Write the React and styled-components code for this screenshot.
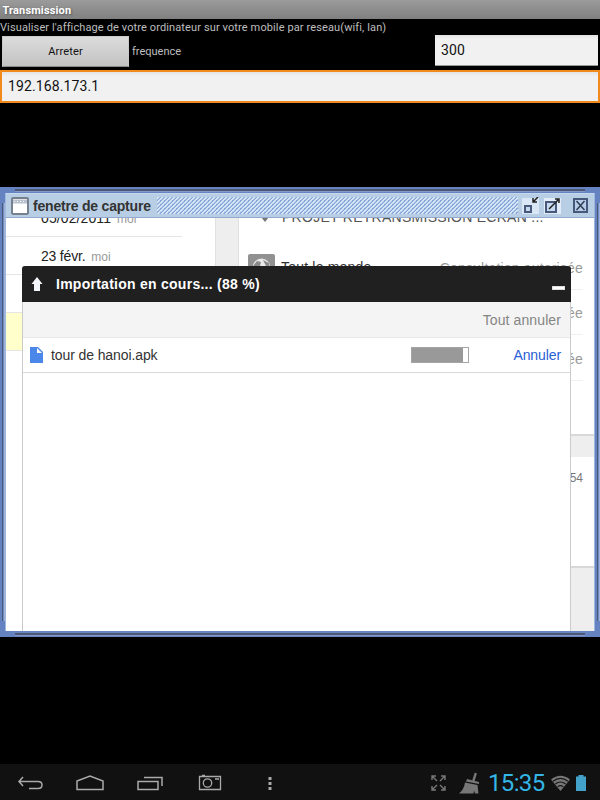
import React from "react";
import styled, { createGlobalStyle } from "styled-components";

const Global = createGlobalStyle`
  *{box-sizing:border-box}
  body{margin:0;background:#000;overflow:hidden}
`;
const Screen = styled.div`
  width:600px;height:800px;background:#000;color:#bebebe;display:flex;flex-direction:column;
  font:11px/15px Roboto,sans-serif;overflow:hidden;white-space:nowrap;
`;
const AppTitle = styled.header`
  height:19px;padding:3px 2.5px 0;background:linear-gradient(#9b9b9b,#808080);color:#fff;
  font-weight:700;font-size:11px;line-height:15px;letter-spacing:.14px;text-shadow:1px 1px 2px #555;
`;
const Description = styled.p`margin:0;height:16px;padding-top:1px;line-height:16px;font-size:11px;letter-spacing:.12px;`;
const Controls = styled.div`display:flex;height:35px;padding-right:2px;`;
const StopButton = styled.button`
  width:127px;height:31px;margin:1px 3px 0 2px;padding:0;border:1px solid #c9c9c9;border-bottom-color:#8b8b8b;
  background:linear-gradient(#dcdcdc,#c2c2c2);color:#111;font:11px Roboto,sans-serif;letter-spacing:.15px;
`;
const Label = styled.label`flex:1;line-height:33px;`;
const Field = styled.input`
  display:block;border:0;border-radius:0;outline:0;background:linear-gradient(#e3e3e3,#f1f1f1 4px);
  color:#111;font:14px Roboto,sans-serif;letter-spacing:.12px;
`;
const FrequencyField = styled(Field)`width:163px;height:31px;padding:0 6px;border-bottom:1px solid #999;`;
const AddressField = styled(Field)`
  width:600px;height:33px;border:solid #f18a1c;border-width:2px;padding:0 6px 1px;
`;
const Spacer = styled.div`height:${p => p.$height}px;flex:none;`;

const Frame = styled.section`
  height:450px;width:600px;background:#6683c1;display:grid;
  grid-template:6px 438px 6px / 5px 590px 5px;
`;
const Horizontal = styled.div`
  grid-column:1 / 4;margin:0 15px;
  background:linear-gradient(#6683c1 2px,#4c5974 2px 4px,#8198c9 4px 5px,#6683c1 5px);
`;
const Vertical = styled.div`
  margin:10px 0;background:linear-gradient(90deg,#6683c1 2px,#4c5974 2px 3px,#718ac2 3px 4px,#9cb3dc 4px);
`;
const Window = styled.div`display:flex;flex-direction:column;border:solid #a1b6dc;border-width:0 1px;overflow:hidden;`;
const TitleBar = styled.header`
  height:25px;background:#b8cee5;border-bottom:1px solid #91a9cd;border-top:1px solid #c5d8ed;
  display:flex;align-items:center;padding:0 5px 0 5px;
`;
const WindowTitle = styled.h1`
  margin:0 7px 0 4px;width:117px;color:#333;font:bold 14px "Liberation Sans",Arial,sans-serif;letter-spacing:-.2px;
`;
const Dots = styled.div`
  width:361px;height:17px;
  background:linear-gradient(135deg,#86a8d9 12%,#d5e4f6 12% 37%,#a9c2e4 37% 45%,#86a8d9 45% 62%,#d5e4f6 62% 87%,#86a8d9 87%) 0 0/4px 4px;
`;
const WindowActions = styled.div`display:flex;margin-left:auto;gap:5px;svg{display:block}svg:last-child{margin-left:6px}`;
const Content = styled.main`
  flex:1;min-height:0;position:relative;display:grid;grid-template-columns:209px 24px 355px;
  font:14px "Liberation Sans",Arial,sans-serif;overflow:hidden;
`;
const History = styled.div`background:#fff;margin-top:-19px;`;
const HistoryRow = styled.div`
  width:${p => p.$wide ? 209 : 176}px;height:38px;border-bottom:1px solid #e5e5e5;padding-left:35px;line-height:38px;color:#222;
  background:${p => p.$active ? "#ffffcb" : "#fff"};
  span{letter-spacing:${p => p.$spacing || "-.2px"}}
  small{margin-left:6px;font-size:12px;color:#999;letter-spacing:0}
`;
const Gutter = styled.div`background:#eee;border:solid #e1e1e1;border-width:0 1px;`;
const Sharing = styled.div`background:#eee;overflow:hidden;`;
const Card = styled.div`
  height:${p => p.$height}px;margin-top:${p => p.$gap || 0}px;background:#fff;border-bottom:2px solid #d8d8d8;
  padding:${p => p.$pad || "0"} 11px 0 9px;overflow:hidden;
`;
const ProjectRow = styled.div`
  height:16px;margin-top:-9px;display:flex;align-items:center;gap:11px;padding-left:11px;color:#555;
  letter-spacing:.27px;
  svg{flex:none}
`;
const ShareRow = styled.div`
  height:${p => p.$height || 45}px;display:flex;align-items:center;border-bottom:1px solid #f0f0f0;color:#999;
  svg{margin-right:6px}
  strong{font-weight:400;color:#333;letter-spacing:.2px}
  span{margin-left:auto;letter-spacing:.18px;padding-top:2px}
`;
const Count = styled.div`text-align:right;color:#777;font-size:12px;line-height:14px;`;
const Upload = styled.section`
  position:absolute;left:16px;top:48px;width:549px;height:366px;background:#fff;
  border:solid #cbcbcb;border-width:0 1px;border-radius:3px 3px 0 0;
`;
const UploadHeader = styled.header`
  height:36px;margin:0 -1px;background:#202020;color:#fff;border-radius:3px 3px 0 0;display:flex;
  align-items:center;padding:0 6px 0 8px;
  h2{margin:0 0 0 12px;font:bold 14px "Liberation Sans",Arial,sans-serif;letter-spacing:.26px}
`;
const Minimize = styled.i`width:13px;height:4px;margin:7px 0 0 auto;background:#fff;border:1px solid #ddd;`;
const CancelAll = styled.div`
  height:36px;background:#f4f4f4;border-bottom:1px solid #e8e8e8;color:#858585;text-align:right;
  line-height:36px;padding-right:9px;letter-spacing:.1px;
`;
const FileRow = styled.div`
  height:35px;display:flex;align-items:center;border-bottom:1px solid #d9d9d9;color:#333;padding:0 9px 0 7px;
`;
const FileName = styled.span`margin-left:8px;width:360px;letter-spacing:-.1px;`;
const Progress = styled.div`
  width:58px;height:16px;border:1px solid #a4a4a4;background:#fff;
  &::after{content:"";display:block;width:51px;height:14px;background:#999}
`;
const Cancel = styled.a`margin-left:auto;color:#2860d5;letter-spacing:-.1px;`;
const SystemBar = styled.footer`
  height:36px;margin-top:auto;background:#111;display:flex;align-items:center;
`;
const Navigation = styled.nav`
  display:grid;grid-template-columns:repeat(5,60px);width:430px;padding-top:3px;justify-items:center;flex:none;
  svg{display:block}
`;
const Status = styled.div`display:flex;align-items:center;svg{flex:none;display:block;margin-top:1px}`;
const Clock = styled.time`
  width:62px;margin-left:7px;padding-top:2px;color:#33b5e5;font:24px/28px Roboto,sans-serif;letter-spacing:-.65px;
`;

const Icon = ({ w, h, children, ...rest }) => (
  <svg width={w} height={h} viewBox={`0 0 ${w} ${h}`} fill="none" {...rest}>{children}</svg>
);

export default function App() {
  return <><Global /><Screen>
    <AppTitle>Transmission</AppTitle>
    <Description>Visualiser l'affichage de votre ordinateur sur votre mobile par reseau(wifi, lan)</Description>
    <Controls>
      <StopButton>Arreter</StopButton>
      <Label>frequence</Label>
      <FrequencyField defaultValue="300" />
    </Controls>
    <AddressField defaultValue="192.168.173.1" />
    <Spacer $height={84} />
    <Frame>
      <Horizontal />
      <Vertical />
      <Window>
        <TitleBar>
          <Icon w={18} h={18}>
            <rect x="1" y="1" width="16" height="16" rx="1" fill="#fff" stroke="#77818e" strokeWidth="2" />
            <path d="M2 4.5h14" stroke="#b8c1cd" strokeWidth="4" /><path d="M3 4.5h12" stroke="#fff" strokeDasharray="1 2" />
          </Icon>
          <WindowTitle>fenetre de capture</WindowTitle>
          <Dots />
          <WindowActions>
            <Icon w={17} h={18}>
              <path fill="#d8e6f5" d="M0 1h17v16H0z" /><path d="M3 9h6v6H3z" fill="#c5d8ee" stroke="#48587a" strokeWidth="2" />
              <path d="m16 0-4.5 4.5M11 1v4h4" stroke="#222" strokeWidth="1.5" />
            </Icon>
            <Icon w={17} h={18}>
              <path fill="#e1ecf8" d="M0 1h17v16H0z" /><path d="M2 5h10v10H2z" fill="#c5d8ee" stroke="#48587a" strokeWidth="2" />
              <path d="m5 12 10-10m-4 0h4v4" stroke="#222" strokeWidth="1.5" />
            </Icon>
            <Icon w={17} h={18}>
              <path d="M2 2h13v13H2z" fill="#b7cce8" stroke="#48587a" strokeWidth="2" />
              <path d="m4.5 4 8 9m0-9-8 9" stroke="#303c51" strokeWidth="1.5" />
            </Icon>
          </WindowActions>
        </TitleBar>
        <Content>
          <History>
            <HistoryRow $spacing=".1px"><span>05/02/2011</span><small>moi</small></HistoryRow>
            <HistoryRow $wide><span>23 févr.</span><small>moi</small></HistoryRow>
            <HistoryRow />
            <HistoryRow $active />
          </History>
          <Gutter />
          <Sharing>
            <Card $height={218}>
              <ProjectRow>
                <Icon w={12} h={12}><path d="M2 6h8l-4 5z" fill="#777" /></Icon>
                <span>PROJET RETRANSMISSION ECRAN ...</span>
              </ProjectRow>
              <Spacer $height={20} />
              <ShareRow>
                <Icon w={27} h={27}>
                  <rect width="27" height="27" rx="2" fill="#919191" /><circle cx="13.5" cy="13.5" r="9" fill="#e9e9e9" />
                  <path d="m5 12 4-5 4 1-1 4 5 1 2 6-5 2-3-5-5-1m9-9 6 3 1 5-4-2z" fill="#8b8b8b" />
                </Icon>
                <strong>Tout le monde</strong><span>Consultation autorisée</span>
              </ShareRow>
              <ShareRow><span>ée</span></ShareRow>
              <ShareRow $height={46}><span>ée</span></ShareRow>
            </Card>
            <Card $height={111} $gap={21} $pad="14px"><Count>54</Count></Card>
          </Sharing>
          <Upload>
            <UploadHeader>
              <Icon w={14} h={16}><path d="M7 1 12.5 8H10v7H4V8H1.500z" fill="#f3f6fb" /></Icon>
              <h2>Importation en cours... (88 %)</h2>
              <Minimize />
            </UploadHeader>
            <CancelAll>Tout annuler</CancelAll>
            <FileRow>
              <Icon w={13} h={16}><path d="M0 0h8l5 5v11H0z" fill="#4b87e8" /><path d="M7 1v5h5z" fill="#fff" /></Icon>
              <FileName>tour de hanoi.apk</FileName>
              <Progress />
              <Cancel>Annuler</Cancel>
            </FileRow>
          </Upload>
        </Content>
      </Window>
      <Vertical />
      <Horizontal />
    </Frame>
    <SystemBar>
      <Navigation>
        <Icon w={28} h={20} stroke="#aaa" strokeWidth="1.5"><path d="m7 3-4 4.5L7 12M3 7.5h19q4 0 4 3.5t-4 3.5h-9" /></Icon>
        <Icon w={30} h={20} stroke="#aaa" strokeWidth="1.5"><path d="M2 7 15 2l13 5v8.5H2z" /></Icon>
        <Icon w={28} h={20} stroke="#aaa" strokeWidth="1.5"><path d="M2 7.5h20v8H2zM8 3.5h18V12" /></Icon>
        <Icon w={26} h={20} stroke="#aaa" strokeWidth="1.3"><path d="M2.500 2.500h21v13h-21zM5 1.500h3M18 5h4" /><circle cx="10.5" cy="9" r="4.2" /></Icon>
        <Icon w={6} h={20}><path d="M1.500 3h3v3h-3zM1.500 8h3v3h-3zM1.500 13h3v3h-3z" fill="#aaa" /></Icon>
      </Navigation>
      <Status>
        <Icon w={17} h={18} stroke="#777" strokeWidth="1.4">
          <path d="M2 6V2h4M2 2l5 5M11 2h4v4m0-4-5 5M2 12v4h4m-4 0 5-5m4 5h4v-4m0 4-5-5" />
        </Icon>
        <Icon w={34} h={24}>
          <path d="M28.500 3 26.500 9.500" stroke="#777" strokeWidth="2.500" strokeLinecap="round" />
          <path d="m20 8 12 3v2l-13-2.500zM18 11.500l12.500 2.500 1 8.500H28l-1-3-.5 3H12q5-4 6-11z" fill="#777" />
        </Icon>
        <Clock>15:35</Clock>
        <Icon w={21} h={18}>
          <path d="M1 5.500Q10.500-2 20 5.500L10.500 17z" fill="#777" />
          <path d="M3 7.200q7.500-5.500 15 0M5.300 10q5.200-4 10.400 0M7.700 12.700q2.800-2 5.600 0" stroke="#191919" strokeWidth="1.200" />
        </Icon>
        <Icon w={17} h={18}><path d="M5 2.500h2.500V1h5v1.500H15V17H5z" fill="#43a2c9" /></Icon>
      </Status>
    </SystemBar>
  </Screen></>;
}
